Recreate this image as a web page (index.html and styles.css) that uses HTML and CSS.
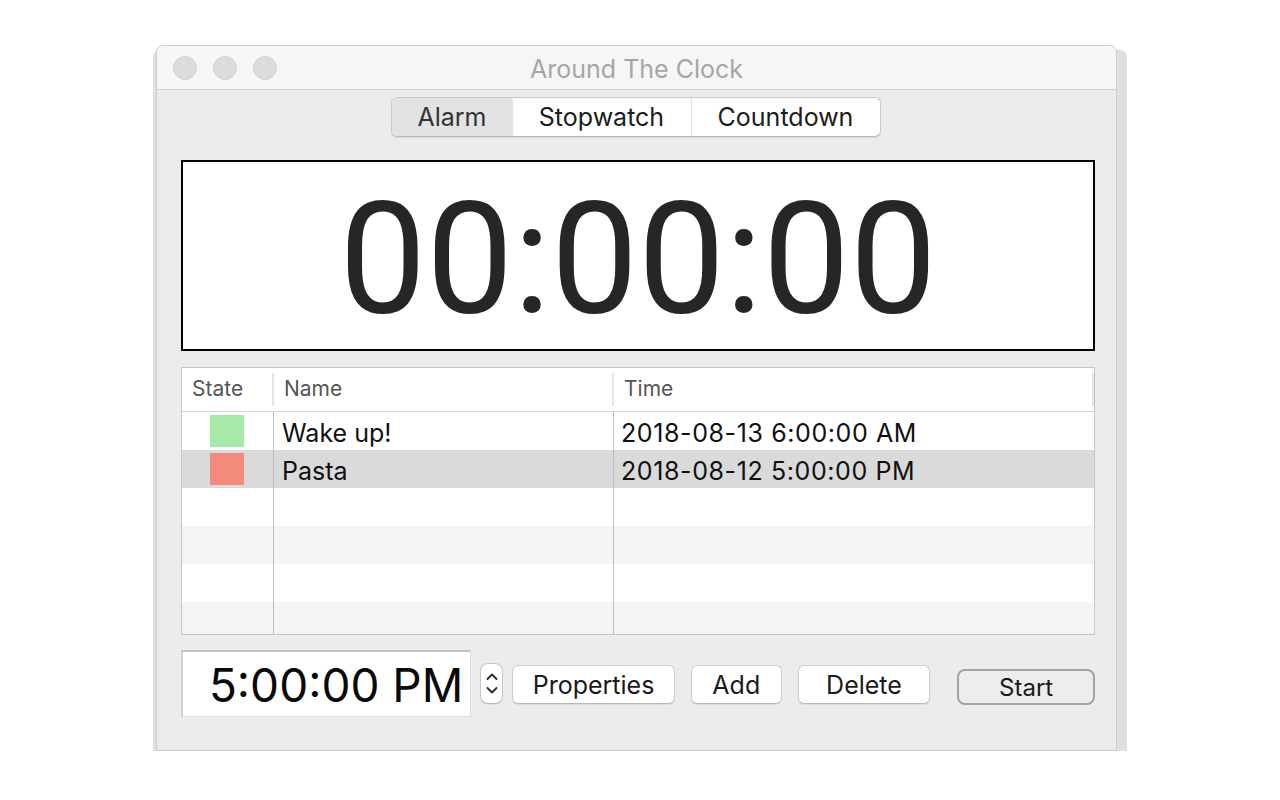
FILE: index.html
```html
<!DOCTYPE html>
<html>
<head>
<meta charset="utf-8">
<title>Around The Clock</title>
<link rel="stylesheet" href="styles.css">
</head>
<body>
<div class="desk">
  <div class="window">
    <div class="titlebar">
      <div class="lights">
        <span class="light"></span><span class="light"></span><span class="light"></span>
      </div>
      <div class="title">Around The Clock</div>
      <div></div>
    </div>
    <div class="content">
      <div class="segbar">
        <div class="seg">
          <div class="seg-item seg-alarm selected">Alarm</div>
          <div class="seg-item seg-stop">Stopwatch</div>
          <div class="seg-item seg-count">Countdown</div>
        </div>
      </div>
      <div class="clock">00:00:00</div>
      <div class="table">
        <div class="thead">
          <div class="th th-state">State</div>
          <div class="th th-name">Name</div>
          <div class="th th-time">Time</div>
        </div>
        <div class="tbody">
          <div class="tr">
            <div class="td td-state"><span class="swatch green"></span></div>
            <div class="td td-name">Wake up!</div>
            <div class="td td-time">2018-08-13 6:00:00 AM</div>
          </div>
          <div class="tr selected">
            <div class="td td-state"><span class="swatch red"></span></div>
            <div class="td td-name">Pasta</div>
            <div class="td td-time">2018-08-12 5:00:00 PM</div>
          </div>
          <div class="tr"><div class="td td-state"></div><div class="td td-name"></div><div class="td td-time"></div></div>
          <div class="tr alt"><div class="td td-state"></div><div class="td td-name"></div><div class="td td-time"></div></div>
          <div class="tr"><div class="td td-state"></div><div class="td td-name"></div><div class="td td-time"></div></div>
          <div class="tr alt"><div class="td td-state"></div><div class="td td-name"></div><div class="td td-time"></div></div>
        </div>
      </div>
      <div class="controls">
        <div class="timefield">5:00:00 PM</div>
        <div class="stepper">
          <svg width="20" height="39" viewBox="0 0 20 39">
            <path d="M5.5 15 L10 10.5 L14.5 15" fill="none" stroke="#2a2a2a" stroke-width="1.8" stroke-linecap="round" stroke-linejoin="round"/>
            <path d="M5.5 24 L10 28.5 L14.5 24" fill="none" stroke="#2a2a2a" stroke-width="1.8" stroke-linecap="round" stroke-linejoin="round"/>
          </svg>
        </div>
        <button class="btn btn-props">Properties</button>
        <button class="btn btn-add">Add</button>
        <button class="btn btn-del">Delete</button>
        <button class="btn-start">Start</button>
      </div>
    </div>
  </div>
</div>
</body>
</html>
```
FILE: styles.css
```css
* { box-sizing: border-box; }
html, body { margin: 0; padding: 0; background: #ffffff; }
body { font-family: "Inter", "Roboto", "Liberation Sans", sans-serif; color: #1a1a1a; }

.desk { padding: 45px 0 0 156px; }

.window {
  width: 961px;
  height: 706px;
  background: #ececec;
  border: 1px solid #cdcdcd;
  border-radius: 7px 7px 0 0;
  box-shadow: -3px 5px 0 0 #e0e0e0, 10px 5px 0 0 #e0e0e0;
}

.titlebar {
  height: 44px;
  background: #f6f6f6;
  border-bottom: 1px solid #d2d2d2;
  border-radius: 6px 6px 0 0;
  display: grid;
  grid-template-columns: 1fr auto 1fr;
  align-items: center;
}
.lights { display: flex; gap: 16px; padding-left: 16px; }
.light {
  width: 24px; height: 24px; border-radius: 50%;
  background: #dcdcdc; border: 1px solid #d2d2d2;
}
.title { font-size: 25px; color: #a6a6a6; padding-top: 2px; }

.content { padding: 7px 0 0 24px; }

.segbar { display: flex; justify-content: center; padding-right: 24px; margin-left: -2px; }
.seg {
  display: flex; height: 40px;
  border: 1px solid #c9c9c9; border-bottom-color: #b9b9b9;
  border-radius: 6px; background: #fff; overflow: hidden;
  box-shadow: 0 1px 1px rgba(0,0,0,0.08);
}
.seg-item { display: flex; align-items: center; justify-content: center; font-size: 25px; color: #1c1c1c; }
.seg-alarm { width: 121px; background: #e3e3e3; color: #333; }
.seg-stop { width: 179px; border-right: 1px solid #e2e2e2; }
.seg-count { width: 188px; }

.clock {
  margin-top: 23px;
  width: 914px; height: 191px;
  border: 2px solid #000; background: #fff;
  display: flex; align-items: center; justify-content: center;
  font-family: "Roboto", "Inter", sans-serif;
  font-size: 155px; color: #262626; line-height: 1;
  padding-top: 8px; padding-left: 0;
}

.table {
  margin-top: 16px;
  width: 914px;
  border: 1px solid #c6c6c6;
  background: #fff;
}
.thead {
  display: grid; grid-template-columns: 92px 340px 1fr;
  height: 44px; align-items: center;
  border-bottom: 1px solid #d6d6d6;
}
.th {
  height: 33px; display: flex; align-items: center;
  font-size: 21px; color: #555; padding-left: 10px; padding-bottom: 2px;
}
.th-state, .th-name, .th-time { border-right: 2px solid #e4e4e4; }
.tbody { height: 222px; overflow: hidden; }
.tr { display: grid; grid-template-columns: 92px 340px 1fr; height: 38px; background: #fff; }
.tr.alt { background: #f4f4f4; }
.tr.selected { background: #dadada; }
.td { display: flex; align-items: center; font-size: 25px; color: #111; padding-left: 8px; padding-top: 3px; }
.td-time { letter-spacing: 0.6px; padding-left: 7px; }
.td-state { border-right: 1px solid #bdbdbd; padding-left: 28px; padding-top: 0; }
.td-name { border-right: 1px solid #bdbdbd; }
.swatch { width: 34px; height: 32px; display: block; }
.swatch.green { background: #a6e9a9; }
.swatch.red { background: #f28b7c; }

.controls {
  margin-top: 15px;
  display: flex; align-items: center;
  width: 914px;
}
.timefield {
  width: 291px; height: 67px;
  background: #fff;
  border: 1px solid #dedede;
  border-top: 2px solid #c4c4c4;
  border-left: 2px solid #d0d0d0;
  display: flex; align-items: center; justify-content: flex-end;
  padding-right: 7px; padding-top: 2px;
  font-size: 46px; color: #0a0a0a;
}
.stepper {
  margin-left: 9px;
  width: 23px; height: 41px;
  background: #fff;
  border: 1px solid #c8c8c8; border-bottom-color: #b8b8b8;
  border-radius: 8px;
  display: flex; align-items: center; justify-content: center;
  box-shadow: 0 1px 1px rgba(0,0,0,0.06);
}
.btn {
  font-family: inherit;
  height: 39px; margin-left: 16px; margin-top: 2px;
  background: #fff;
  border: 1px solid #cdcdcd; border-bottom-color: #b9b9b9;
  border-radius: 6px;
  box-shadow: 0 1px 1px rgba(0,0,0,0.07);
  font-size: 25px; color: #1a1a1a; padding: 0;
}
.btn-props { width: 163px; margin-left: 9px; }
.btn-add { width: 91px; }
.btn-del { width: 133px; }
.btn-start {
  font-family: inherit;
  margin-left: 27px; margin-top: 7px;
  width: 138px; height: 36px;
  background: #ededed;
  border: 2px solid #a3a3a3;
  border-radius: 8px;
  font-size: 24px; color: #1a1a1a; padding: 0;
}
```
